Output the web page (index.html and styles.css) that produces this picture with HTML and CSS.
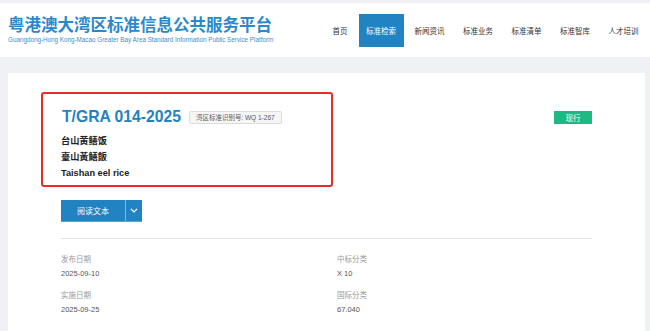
FILE: index.html
```html
<!DOCTYPE html>
<html lang="zh-CN">
<head>
	<meta charset="UTF-8">
	<meta name="viewport" content="width=device-width, initial-scale=1.0">
	<title>标准详情</title>
	<link rel="stylesheet" href="styles.css">
</head>
<body>
	<div class="header">
		<div class="logo">
			<div class="logo-title">粤港澳大湾区标准信息公共服务平台</div>
			<div class="logo-sub">Guangdong-Hong Kong-Macao Greater Bay Area Standard Information Public Service Platform</div>
		</div>
		<div class="nav">
			<a class="nav-item">首页</a>
			<a class="nav-item active">标准检索</a>
			<a class="nav-item">新闻资讯</a>
			<a class="nav-item">标准业务</a>
			<a class="nav-item">标准清单</a>
			<a class="nav-item">标准智库</a>
			<a class="nav-item">人才培训</a>
		</div>
	</div>

	<div class="card">
		<div class="highlight"></div>
		<div class="title-row">
			<div class="title-left">
				<span class="std-code">T/GRA 014-2025</span>
				<span class="std-id">湾区标准识别号: WQ 1-267</span>
			</div>
			<span class="status">现行</span>
		</div>
		<div class="names">
			<div>台山黄鳝饭</div>
			<div>臺山黃鱔飯</div>
			<div>Taishan eel rice</div>
		</div>

		<div class="read-btn">
			<span class="read-main">阅读文本</span>
			<span class="read-drop">
				<svg width="8" height="5" viewBox="0 0 8 5"><path d="M1 1 L4 4 L7 1" fill="none" stroke="#fff" stroke-width="1.2"/></svg>
			</span>
		</div>

		<div class="divider"></div>

		<div class="info">
			<div class="info-item">
				<div class="info-label">发布日期</div>
				<div class="info-value">2025-09-10</div>
			</div>
			<div class="info-item">
				<div class="info-label">中标分类</div>
				<div class="info-value">X 10</div>
			</div>
			<div class="info-item">
				<div class="info-label">实施日期</div>
				<div class="info-value">2025-09-25</div>
			</div>
			<div class="info-item">
				<div class="info-label">国际分类</div>
				<div class="info-value">67.040</div>
			</div>
		</div>
	</div>
</body>
</html>
```

FILE: styles.css
```css
body {
	margin: 0;
	padding-top: 3px;
	background-color: #f0f1f5;
	font-family: 'Liberation Sans', 'Noto Sans CJK SC', sans-serif;
	color: #333;
}
.header {
	height: 54px;
	background-color: #fff;
	display: flex;
	align-items: center;
	justify-content: space-between;
	padding: 0 4px 0 8px;
}
.logo-title {
	font-family: 'Noto Sans CJK SC', sans-serif;
	font-size: 16.5px;
	font-weight: bold;
	color: #2a88cc;
	line-height: 20px;
	margin-top: -2px;
}
.logo-sub {
	font-size: 6.3px;
	color: #3b8fcc;
	line-height: 8px;
	margin-top: 2px;
	white-space: nowrap;
}
.nav {
	display: flex;
	gap: 3.5px;
}
.nav-item {
	font-family: 'Noto Sans CJK SC', sans-serif;
	font-size: 7.5px;
	color: #333;
	padding: 0 7.5px;
	height: 33px;
	line-height: 33px;
	margin-top: 1px;
}
.nav-item.active {
	background-color: #2283c3;
	color: #fff;
}
.card {
	position: relative;
	background-color: #fff;
	margin: 16px 0 0 8px;
	width: 531px;
	padding: 34px 53px 40px;
}
.highlight {
	position: absolute;
	left: 33px;
	top: 19px;
	width: 288px;
	height: 91px;
	border: 2px solid #ec2b25;
	border-radius: 3px;
}
.title-row {
	display: flex;
	align-items: center;
	justify-content: space-between;
	height: 20px;
}
.title-left {
	display: flex;
	align-items: center;
}
.std-code {
	font-size: 15.7px;
	font-weight: bold;
	color: #2283c3;
	line-height: 20px;
	margin-left: 1px;
}
.std-id {
	margin-left: 8px;
	font-size: 6.5px;
	color: #555;
	background-color: #f6f6f6;
	border: 1px solid #dcdcdc;
	border-radius: 2px;
	padding: 0 6px;
	height: 11px;
	line-height: 11px;
}
.status {
	font-family: 'Noto Sans CJK SC', sans-serif;
	font-size: 7.5px;
	color: #fff;
	background-color: #1cb985;
	width: 38px;
	height: 13px;
	line-height: 13px;
	text-align: center;
	margin-top: 1px;
}
.names {
	margin-top: 6px;
	font-size: 9.2px;
	font-weight: bold;
	color: #222;
	line-height: 16px;
}
.read-btn {
	display: inline-flex;
	margin-top: 19px;
	height: 22px;
	background-color: #2283c3;
	color: #fff;
	border-bottom: 1px solid #5aa3d6;
	box-sizing: border-box;
}
.read-main {
	font-family: 'Noto Sans CJK SC', sans-serif;
	font-size: 8px;
	width: 64px;
	line-height: 21px;
	text-align: center;
	border-right: 1px solid #7db7e2;
}
.read-drop {
	width: 16px;
	display: flex;
	align-items: center;
	justify-content: center;
}
.divider {
	margin-top: 16px;
	height: 1px;
	background-color: #e3e3e3;
}
.info {
	display: grid;
	grid-template-columns: 276px 1fr;
	margin-top: 14px;
}
.info-item {
	margin-bottom: 8px;
}
.info-label {
	font-size: 7.5px;
	color: #999;
	line-height: 14px;
}
.info-value {
	font-size: 7.5px;
	color: #555;
	line-height: 14px;
}
```
